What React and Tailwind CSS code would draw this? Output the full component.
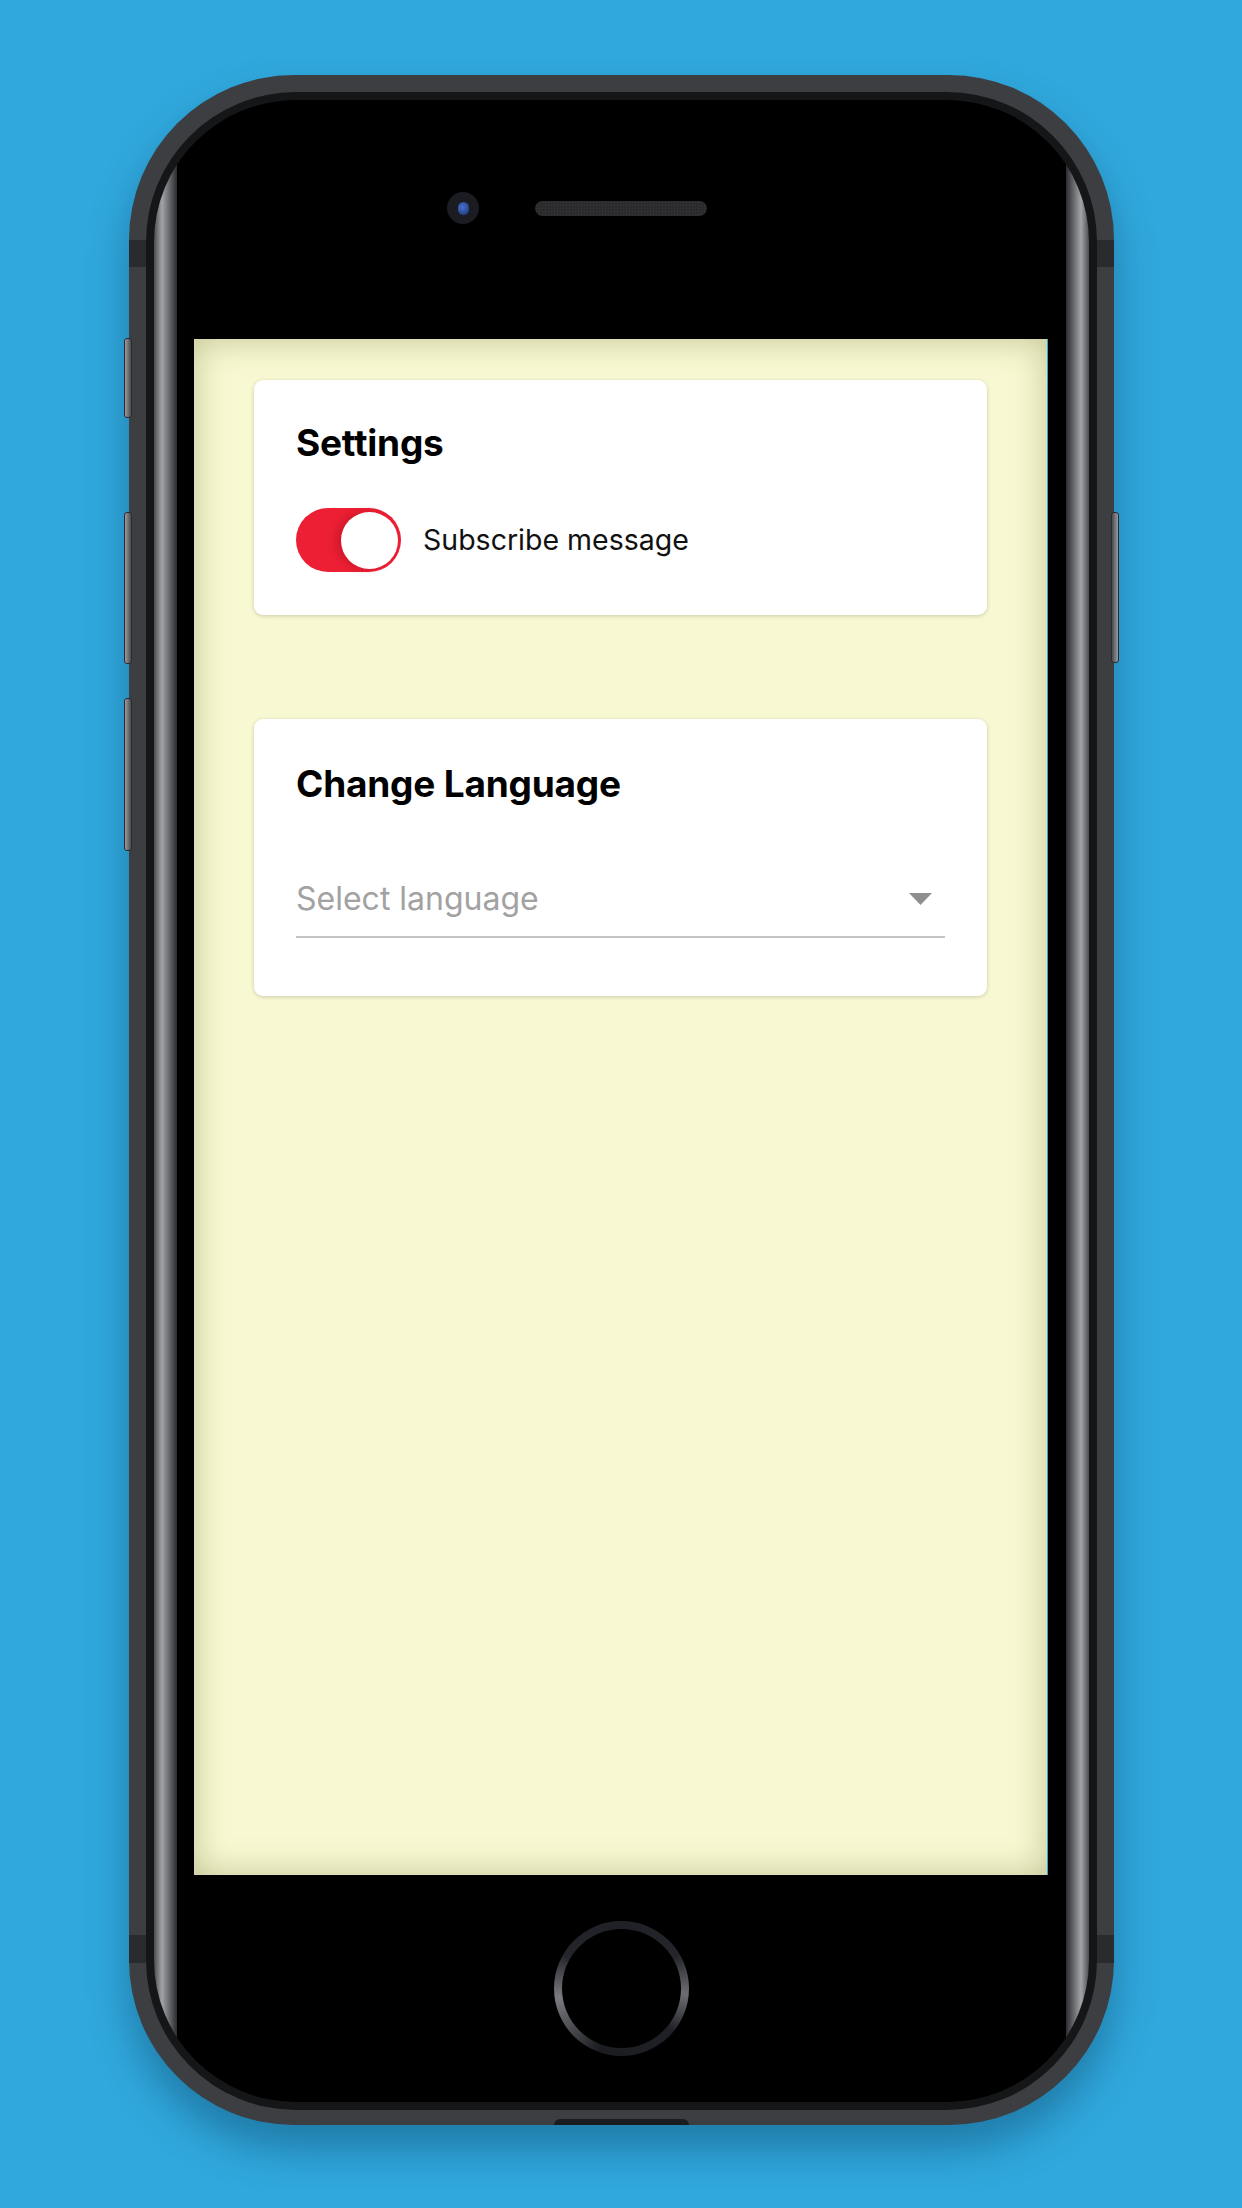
import React, { useState } from 'react';

const font = { fontFamily: 'Inter, "Noto Sans", sans-serif' };

const Toggle = ({ on, onChange }) => (
  <button
    onClick={() => onChange(!on)}
    className={`flex items-center w-[105px] h-[64px] rounded-full px-[3px] ${on ? 'justify-end bg-[#ed1f35]' : 'justify-start bg-[#d6d6d6]'}`}
  >
    <span className="block w-[57px] h-[57px] rounded-full bg-white shadow-[-5px_0_8px_rgba(120,0,10,0.25)]" />
  </button>
);

const Card = ({ title, children, className = '' }) => (
  <div className={`bg-white rounded-[9px] shadow-[0_1px_4px_rgba(0,0,0,0.18)] px-[42px] ${className}`}>
    <h2 className="text-[37px] leading-[44px] font-bold text-black tracking-[-0.2px]">{title}</h2>
    {children}
  </div>
);

const Screen = () => {
  const [subscribed, setSubscribed] = useState(true);
  return (
    <div className="w-[854px] h-[1536px] bg-[#f8f8d2] border-r border-[#2fa8dd] shadow-[inset_0_0_34px_rgba(110,110,50,0.38)] px-[60px] pt-[41px]" style={font}>
      <Card title="Settings" className="pt-[41px] pb-[43px]">
        <div className="flex items-center gap-[22px] mt-[43px]">
          <Toggle on={subscribed} onChange={setSubscribed} />
          <span className="text-[28.5px] leading-[40px] text-[#111]">Subscribe message</span>
        </div>
      </Card>
      <Card title="Change Language" className="mt-[104px] pt-[43px] pb-[58px]">
        <div className="flex items-center justify-between mt-[73px] pb-[17px] border-b-[2px] border-[#c4c4c4]">
          <span className="text-[32px] leading-[40px] text-[#a2a2a2]">Select language</span>
          <svg width="23" height="12" viewBox="0 0 23 12" className="mr-[13px]">
            <path d="M0 0 L23 0 L11.5 12 Z" fill="#8f8f8f" />
          </svg>
        </div>
      </Card>
    </div>
  );
};

const sideBtn = 'absolute w-[8px] rounded-[3px] border border-[#2a2b2e]';

const Phone = () => (
  <div className="relative w-[985px] h-[2050px] rounded-[165px] bg-[#3d3e42] pt-[17px] px-[17px] pb-[15px] shadow-[0_24px_40px_rgba(0,40,70,0.35)]">
    {/* side buttons */}
    <div className={`${sideBtn} left-[-5px] top-[263px] h-[80px] bg-[linear-gradient(to_right,#9a9b9f,#4a4b4f)]`} />
    <div className={`${sideBtn} left-[-5px] top-[437px] h-[152px] bg-[linear-gradient(to_right,#9a9b9f,#4a4b4f)]`} />
    <div className={`${sideBtn} left-[-5px] top-[623px] h-[153px] bg-[linear-gradient(to_right,#9a9b9f,#4a4b4f)]`} />
    <div className={`${sideBtn} right-[-5px] top-[437px] h-[151px] bg-[linear-gradient(to_left,#9a9b9f,#4a4b4f)]`} />
    {/* antenna bands */}
    <div className="absolute left-0 top-[165px] w-[17px] h-[27px] bg-[#2a2b2e]" />
    <div className="absolute right-0 top-[165px] w-[17px] h-[27px] bg-[#2a2b2e]" />
    <div className="absolute left-0 top-[1860px] w-[17px] h-[28px] bg-[#2a2b2e]" />
    <div className="absolute right-0 top-[1860px] w-[17px] h-[28px] bg-[#2a2b2e]" />
    {/* bottom notch */}
    <div className="absolute bottom-0 left-[425px] w-[135px] h-[6px] rounded-t-[6px] bg-[#1b1c1f]" />

    <div className="w-full h-full rounded-[150px] bg-[#151618] p-[8px]">
      <div className="w-full h-full rounded-[142px] overflow-hidden bg-[linear-gradient(to_right,#4b4c50_0px,#a3a4a7_8px,#6a6b6f_15px,#2b2c30_23px,#000_23px,#000_calc(100%-23px),#2b2c30_calc(100%-23px),#6a6b6f_calc(100%-15px),#a3a4a7_calc(100%-8px),#4b4c50_100%)]">
        <div className="mx-[23px] h-full rounded-[125px] bg-black flex flex-col items-center">
          <div className="h-[239px] w-full flex justify-center items-start pt-[92px]">
            <div className="flex items-center gap-[56px] pr-[88px]">
              <div className="w-[32px] h-[32px] rounded-full bg-[#1b1c21] flex items-center justify-center">
                <div className="w-[11px] h-[13px] rounded-full bg-[radial-gradient(circle_at_40%_40%,#4a6fd0,#17306e)]" />
              </div>
              <div className="w-[172px] h-[15px] rounded-full bg-[#2b2b2d] bg-[radial-gradient(#3a3a3c_1px,transparent_1px)] bg-[length:3px_3px]" />
            </div>
          </div>
          <Screen />
          <div className="flex-1 w-full flex items-center justify-center">
            <div className="w-[135px] h-[135px] rounded-full p-[8px] bg-[conic-gradient(from_0deg,#202126,#25262b_60deg,#6d6e73_95deg,#202126_130deg,#1b1c20_200deg,#7a7b80_262deg,#25262b_300deg,#202126)]">
              <div className="w-full h-full rounded-full bg-black" />
            </div>
          </div>
        </div>
      </div>
    </div>
  </div>
);

export default function App() {
  return (
    <div className="w-[1242px] h-[2208px] bg-[#30a8dd] flex justify-center pt-[75px] overflow-hidden">
      <Phone />
    </div>
  );
}
